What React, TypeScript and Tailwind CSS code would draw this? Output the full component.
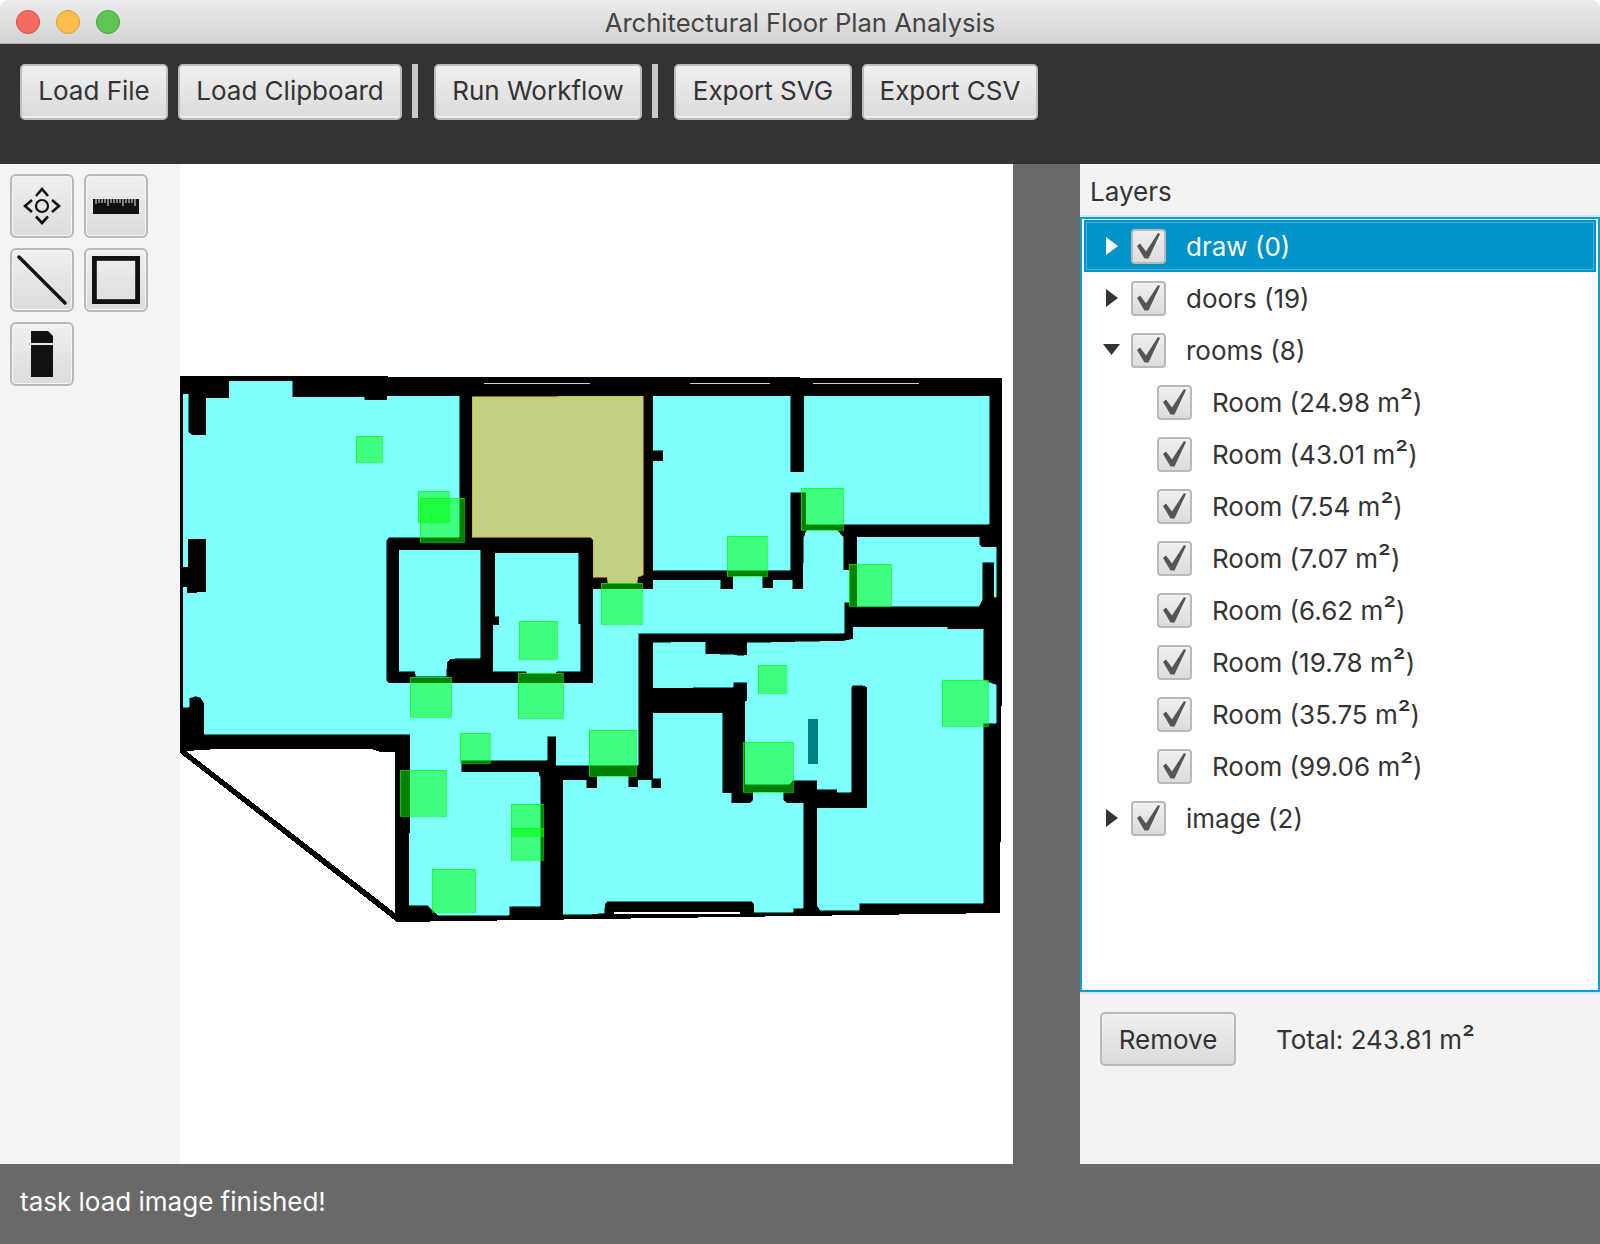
import React from "react";

const font = { fontFamily: "Inter, 'Liberation Sans', sans-serif" };

const CYAN: string[] = [
  "183,394 188,394 188,432 192,435 206,435 206,398 229,398 229,381 292,381 292,397 364,397 364,400 387,400 387,396 459,396 459,537 389,537 386,541 386,681 389,683 593,683 593,633 638,633 638,765 556,765 556,736 547,736 547,760 461,760 461,772 538,772 540,777 540,906 509,906 509,915 438,915 427,905 409,905 409,833 410,833 410,734 204,734 204,703 201,698 196,696 189,698 189,707 183,707",
  "593,589 653,589 653,580 720,580 720,589 733,589 733,576 762,576 762,588 773,588 773,580 792,580 792,589 803,589 804,537 807,530 837,530 843,537 843,570 849,570 849,602 844,602 844,633 593,633",
  "653,396 790,396 790,472 806,472 806,492 790,492 790,570 653,570 653,461 663,461 663,450 653,450",
  "804,396 989,396 989,524 806,524 806,488 804,488",
  "857,537 979,537 979,545 982,547 996,547 996,597 994,597 994,562 982,562 982,600 979,606 857,606",
  "653,643 689,642 705,642 705,654 734,655 740,656 747,655 747,643 844,641 853,639 853,627 947,627 947,629 983,629 983,680 996,685 996,723 983,723 983,903 902,903 859,903 859,910 820,910 817,905 817,808 867,808 867,687 862,685 853,685 851,687 851,792 837,792 837,789 817,789 817,780 793,780 790,784 745,784 745,701 747,701 747,682 733,682 733,687 653,688",
  "563,780 586,780 586,788 597,788 597,776 628,776 628,787 638,787 638,780 651,780 651,788 661,788 661,778 653,778 653,713 722,713 722,793 731,793 731,803 750,803 753,800 753,792 783,792 783,800 787,803 803,803 803,908 793,908 793,912 754,912 754,904 752,901 607,901 605,904 604,913 592,914 563,914",
  "399,550 480,550 480,658 460,658 450,659 447,662 446,676 416,676 415,671 399,671",
  "495,553 578,553 578,624 580,624 580,671 557,671 555,673 527,673 525,671 493,671 493,625 499,625 499,616 495,616",
];

const GREEN: number[][] = [
  [356, 436, 26, 26], [418, 491, 31, 31], [420, 498, 44, 44], [519, 621, 38, 38], [601, 583, 41, 41],
  [727, 536, 40, 40], [801, 488, 42, 42], [849, 564, 42, 42], [758, 665, 28, 28], [410, 677, 41, 40],
  [518, 673, 45, 45], [460, 733, 30, 30], [400, 770, 46, 46], [511, 804, 32, 32], [511, 828, 32, 32],
  [432, 869, 43, 43], [589, 730, 47, 46], [743, 742, 50, 50], [942, 680, 46, 46],
];

function FloorPlan() {
  return (
    <svg width="833" height="1000" viewBox="180 164 833 1000" className="block" shapeRendering="crispEdges">
      <polygon points="180,753 180,376 1002,378 1002,640 1000,913 397,922" fill="#000" />
      <polygon points="186,751 218,749 372,749 380,752 395,752 395,913" fill="#fff" />
      {CYAN.map((p, i) => (
        <polygon key={`s${i}`} points={p} fill="none" stroke="#20eaea" strokeWidth="0.6" />
      ))}
      {CYAN.map((p, i) => (
        <polygon key={i} points={p} fill="#80ffff" />
      ))}
      <polygon points="188,539 206,539 206,592 197,592 197,593 187,593 187,587 183,587 183,567 188,567" fill="#000" />
      <polygon
        points="472,397 643,396 643,575 638,577 637,583 608,583 607,577 593,577 593,540 590,537 472,537"
        fill="#c1d082"
        stroke="#f0a800"
        strokeWidth="0.6"
      />
      <rect x="484" y="383" width="106" height="1" fill="#d0d0d0" />
      <rect x="690" y="383" width="80" height="1" fill="#d0d0d0" />
      <rect x="813" y="383" width="106" height="1" fill="#d0d0d0" />
      <rect x="614" y="912" width="126" height="2" fill="#fff" />
      <rect x="808" y="719" width="10" height="45" fill="#008080" />
      {GREEN.map(([x, y, w, h], i) => (
        <rect key={i} x={x} y={y} width={w} height={h} fill="#00ff00" fillOpacity="0.5" stroke="#00ff00" strokeOpacity="0.85" strokeWidth="0.7" />
      ))}
    </svg>
  );
}

function TopButton({ label, w, extra }: { label: string; w: string; extra?: string }) {
  return (
    <button
      className={`${w} ${extra ?? ""} h-[56px] rounded-[5px] border-2 border-[#bdbdbd] pb-[3px] bg-gradient-to-b from-[#f0f0f0] to-[#dadada] text-[#333] text-[26px] flex items-center justify-center shadow-[inset_0_-2px_0_#ededed]`}
    >
      {label}
    </button>
  );
}

function Sep() {
  return <div className="w-[6px] h-[54px] bg-[#c8c8c8]" />;
}

function ToolButton({ children }: { children: React.ReactNode }) {
  return (
    <button className="w-[64px] h-[64px] rounded-[6px] border-2 border-[#b9b9b9] bg-gradient-to-b from-[#f0f0f0] to-[#dbdbdb] flex items-center justify-center shadow-[inset_0_0_0_1px_#f6f6f6]">
      {children}
    </button>
  );
}

function Check() {
  return (
    <div className="w-[35px] h-[35px] shrink-0 rounded-[4px] border-2 border-[#b9b9b9] bg-gradient-to-b from-[#f0f0f0] to-[#dcdcdc] relative">
      <svg width="31" height="31" viewBox="0 0 31 31" className="absolute left-0 top-0">
        <polygon points="4,15 7,12.5 13,20.5 25,2 27,3 15.5,27.5 11.5,27.5" fill="#555" />
      </svg>
    </div>
  );
}

function Arrow({ open, light }: { open?: boolean; light?: boolean }) {
  const c = light ? "#ffffff" : "#333333";
  return (
    <svg width="20" height="20" viewBox="0 0 20 20" className="shrink-0">
      {open ? <polygon points="0,4 17,4 8.5,15" fill={c} /> : <polygon points="3,1 15,10 3,19" fill={c} />}
    </svg>
  );
}

function Sq() {
  return <span className="text-[29px] leading-[0]">²</span>;
}

function TreeRow({
  label,
  nested,
  arrow,
  selected,
}: {
  label: React.ReactNode;
  nested?: boolean;
  arrow?: "open" | "closed";
  selected?: boolean;
}) {
  const base = nested ? "pl-[75px] text-[#333]" : selected ? "pl-[19px] mx-[2px] text-white bg-[#0093c9] shadow-[inset_0_0_0_2px_#0093c9,inset_0_0_0_3px_#4db3da]" : "pl-[21px] text-[#333]";
  return (
    <div className={`h-[52px] flex items-center ${base}`}>
      {!nested && (
        <div className="w-[28px] shrink-0">
          <Arrow open={arrow === "open"} light={selected} />
        </div>
      )}
      <Check />
      <span className="ml-[20px] pt-[1px] text-[26px] whitespace-nowrap">{label}</span>
    </div>
  );
}

const ROOMS = ["24.98", "43.01", "7.54", "7.07", "6.62", "19.78", "35.75", "99.06"];

export default function App() {
  return (
    <div className="w-[1600px] h-[1244px] overflow-hidden bg-white flex flex-col" style={font}>
      <div className="h-[44px] shrink-0 rounded-t-[8px] border-b border-[#b4b4b4] bg-gradient-to-b from-[#ececec] to-[#d2d2d2] relative flex items-center justify-center">
        <div className="absolute left-[16px] top-[10px] flex gap-[16px]">
          <div className="w-[24px] h-[24px] rounded-full bg-[#f56c60] border border-[#e0443e]" />
          <div className="w-[24px] h-[24px] rounded-full bg-[#fbbd4b] border border-[#dea123]" />
          <div className="w-[24px] h-[24px] rounded-full bg-[#5fc453] border border-[#3fa834]" />
        </div>
        <span className="pt-[4px] text-[25.6px] text-[#444]">Architectural Floor Plan Analysis</span>
      </div>

      <div className="h-[120px] shrink-0 bg-[#333333] pl-[20px] pt-[20px] flex items-start gap-[10px]">
        <TopButton label="Load File" w="w-[148px]" />
        <TopButton label="Load Clipboard" w="w-[224px]" />
        <Sep />
        <TopButton label="Run Workflow" w="w-[208px]" extra="ml-[6px]" />
        <Sep />
        <TopButton label="Export SVG" w="w-[178px]" extra="ml-[6px]" />
        <TopButton label="Export CSV" w="w-[176px]" />
      </div>

      <div className="h-[1000px] shrink-0 flex">
        <div className="w-[180px] shrink-0 bg-[#f4f4f4] pl-[10px] pt-[10px]">
          <div className="grid grid-cols-[64px_64px] gap-[10px]">
            <ToolButton>
              <svg width="40" height="40" viewBox="-20 -20 40 40" fill="none" stroke="#111" strokeWidth="2.6">
                <path d="M-6 -10 L0 -17 L6 -10" />
                <path d="M-6 10.5 L0 17 L6 10.5" />
                <path d="M-10 -6 L-17 0 L-10 6" />
                <path d="M10 -6 L17 0 L10 6" />
                <circle cx="0" cy="0" r="6" strokeWidth="2.2" />
              </svg>
            </ToolButton>
            <ToolButton>
              <svg width="46" height="15" viewBox="0 0 46 15">
                <rect width="46" height="15" fill="#111" />
                <path
                  d="M3 0V5M6 0V4M9 0V4M12 0V4M15 0V7M18 0V4M21 0V4M24 0V4M27 0V4M30 0V7M33 0V4M36 0V4M39 0V4M42 0V7"
                  stroke="#eee"
                  strokeWidth="1"
                />
              </svg>
            </ToolButton>
            <ToolButton>
              <svg width="50" height="50" viewBox="0 0 50 50">
                <line x1="2" y1="2" x2="48" y2="48" stroke="#111" strokeWidth="3.4" strokeLinecap="round" />
              </svg>
            </ToolButton>
            <ToolButton>
              <svg width="48" height="48" viewBox="0 0 48 48">
                <rect x="2.4" y="2.4" width="43.2" height="43.2" fill="none" stroke="#111" strokeWidth="4.8" />
              </svg>
            </ToolButton>
            <ToolButton>
              <svg width="22" height="46" viewBox="0 0 22 46">
                <polygon points="0,0 17,0 22,5 22,12 0,12" fill="#111" />
                <rect x="0" y="14" width="22" height="32" fill="#111" />
              </svg>
            </ToolButton>
          </div>
        </div>

        <div className="w-[833px] shrink-0 bg-white">
          <FloorPlan />
        </div>

        <div className="w-[67px] shrink-0 bg-[#696969]" />

        <div className="w-[520px] shrink-0 bg-[#f3f3f3] flex flex-col">
          <div className="h-[53px] shrink-0 pl-[10px] pt-[1px] flex items-center text-[26px] text-[#333]">Layers</div>
          <div className="h-[775px] shrink-0 bg-white border-2 border-[#02a0d8] pt-px shadow-[0_2px_0_#cfe8f4,0_-2px_0_#cfe8f4] relative">
            <TreeRow label="draw (0)" arrow="closed" selected />
            <TreeRow label="doors (19)" arrow="closed" />
            <TreeRow label="rooms (8)" arrow="open" />
            {ROOMS.map((r) => (
              <TreeRow key={r} label={<>Room ({r} m<Sq />)</>} nested />
            ))}
            <TreeRow label="image (2)" arrow="closed" />
          </div>
          <div className="pl-[20px] pt-[20px] flex items-start">
            <button className="w-[136px] h-[54px] rounded-[5px] border-2 border-[#b9b9b9] bg-gradient-to-b from-[#f0f0f0] to-[#dadada] text-[#333] text-[26px] flex items-center justify-center">
              Remove
            </button>
            <span className="ml-[40px] h-[54px] flex items-center text-[26px] text-[#333]"><span>Total: 243.81 m<Sq /></span></span>
          </div>
        </div>
      </div>

      <div className="h-[80px] shrink-0 bg-[#696969] pl-[20px] pb-[6px] flex items-center text-white text-[26px]">
        task load image finished!
      </div>
    </div>
  );
}
